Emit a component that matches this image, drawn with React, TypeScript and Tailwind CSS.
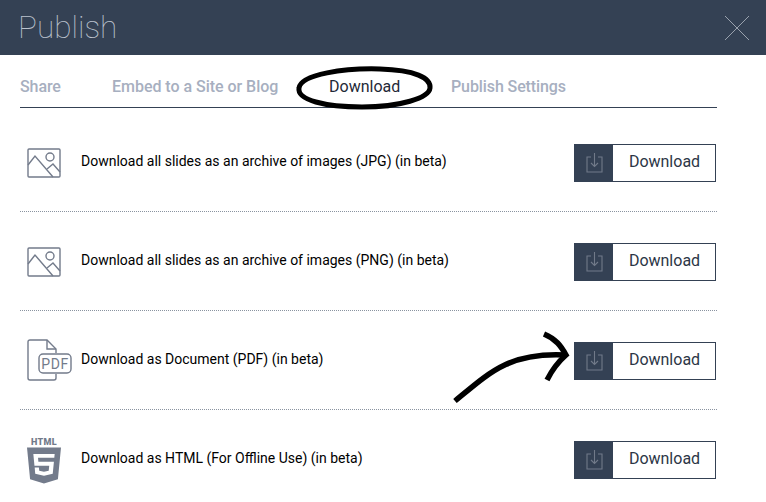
import { FaHtml5 } from "react-icons/fa";

const rows = [
  { icon: "image", label: "Download all slides as an archive of images (JPG) (in beta)" },
  { icon: "image", label: "Download all slides as an archive of images (PNG) (in beta)" },
  { icon: "pdf", label: "Download as Document (PDF) (in beta)" },
  { icon: "html", label: "Download as HTML (For Offline Use) (in beta)" },
];

function ImageIcon() {
  return (
    <svg width="34" height="30" viewBox="0 0 34 30" fill="none" stroke="#737b8b" strokeWidth="1.4">
      <rect x="1" y="1" width="32" height="28" rx="1" />
      <path d="M1 17 L8 8 L26 29" />
      <path d="M20 21 L26 16 L33 24" />
      <circle cx="23" cy="9" r="4" />
    </svg>
  );
}

function PdfIcon() {
  return (
    <div className="relative -mt-[2px] h-[42px] w-[46px]">
      <svg width="46" height="42" viewBox="0 0 46 42" fill="none" stroke="#737b8b" strokeWidth="1.4" className="absolute left-0 top-0">
        <path d="M29 14 V10 L20 1 H3 Q1 1 1 3 V39 Q1 41 3 41 H27 Q29 41 29 39 V35" />
        <path d="M20 1 V10 H29" />
        <rect x="12" y="15" width="32" height="19" rx="4" fill="white" />
      </svg>
      <span className="absolute left-[12px] top-[15px] flex h-[19px] w-[32px] items-center justify-center text-[14px] leading-none tracking-[0.5px] text-[#737b8b]">
        PDF
      </span>
    </div>
  );
}

function HtmlIcon() {
  return (
    <div className="mt-[3px] flex w-[34px] flex-col items-center">
      <span className="text-[9px] font-black leading-[9px] tracking-[0.4px] text-[#737b8b]">HTML</span>
      <FaHtml5 preserveAspectRatio="none" className="-mt-[2px] h-[41px] w-[34px] text-[#737b8b]" />
    </div>
  );
}

function DownloadButton() {
  return (
    <div className="flex h-[38px] w-[142px] shrink-0 border border-[#344154]">
      <div className="flex w-[38px] shrink-0 items-center justify-center bg-[#344154] pl-[1px]">
        <svg width="17" height="20" viewBox="0 0 17 20" fill="none" stroke="#717a89" strokeWidth="1.1">
          <path d="M5 4 H1 V19 H16 V4 H12" />
          <path d="M8.5 0 V13 M5 10 L8.5 13.5 L12 10" />
        </svg>
      </div>
      <div className="flex flex-1 items-center justify-center pb-[2px] pl-[1px] text-[16px] text-[#2c3646]">Download</div>
    </div>
  );
}

function Row({ row }: { row: (typeof rows)[number] }) {
  return (
    <>
      <div className="flex w-[61px] shrink-0 items-center pl-[7px]">
        {row.icon === "image" && <ImageIcon />}
        {row.icon === "pdf" && <PdfIcon />}
        {row.icon === "html" && <HtmlIcon />}
      </div>
      <p className="-mt-[4px] flex-1 text-[14px] text-black">{row.label}</p>
      <div className="mr-[1px]">
        <DownloadButton />
      </div>
    </>
  );
}

export default function App() {
  return (
    <div className="relative h-[502px] w-[766px] overflow-hidden bg-white font-['Roboto',sans-serif]">
      <header className="flex h-[55px] items-center justify-between bg-[#344154] pl-[18px] pr-[16px]">
        <h1 className="text-[31.5px] font-thin leading-none text-[#bcc3ce]">Publish</h1>
        <svg width="26" height="26" viewBox="0 0 26 26" stroke="#9aa2ae" strokeWidth="1">
          <path d="M1 1 L25 25 M25 1 L1 25" />
        </svg>
      </header>

      <div className="ml-[20px] w-[697px]">
        <nav className="flex h-[53px] items-center border-b border-[#344154] pt-[12px] text-[16px] font-medium text-[#a7afc0]">
          <span className="w-[92px] tracking-[-0.1px]">Share</span>
          <span className="w-[217px] tracking-[-0.03px]">Embed to a Site or Blog</span>
          <span className="w-[122px] font-normal text-[#1f2937]">Download</span>
          <span className="tracking-[-0.1px]">Publish Settings</span>
        </nav>

        <div className="flex h-[104px] items-center border-b border-dotted border-[#8a93a0] pt-[7px]">
          <Row row={rows[0]} />
        </div>
        <div className="flex h-[99px] items-center border-b border-dotted border-[#8a93a0] pt-[2px]">
          <Row row={rows[1]} />
        </div>
        <div className="flex h-[99px] items-center border-b border-dotted border-[#8a93a0] pt-[2px]">
          <Row row={rows[2]} />
        </div>
        <div className="flex h-[99px] items-center pt-[1px]">
          <Row row={rows[3]} />
        </div>
      </div>

      {/* hand drawn annotations */}
      <svg width="766" height="502" viewBox="0 0 766 502" fill="none" stroke="black" className="pointer-events-none absolute left-0 top-0">
        <path d="M299 88 C301 74 345 68 380 69 C415 70 431 78 430 88 C429 98 400 107 362 107 C325 107 297 100 299 88 Z" strokeWidth="5" />
        <path d="M455 401 C490 372 510 352 566 355" strokeWidth="5.5" />
        <path d="M544 334 C556 339 561 346 566 355 C558 362 552 370 547 380" strokeWidth="5.5" />
      </svg>
    </div>
  );
}
